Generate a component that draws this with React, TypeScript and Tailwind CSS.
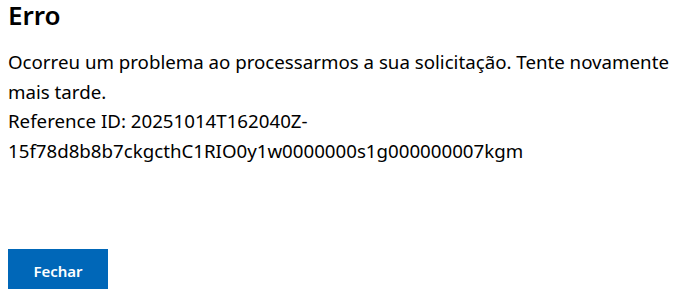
import React from 'react';

export default function App() {
  return (
    <div className="min-h-screen bg-white px-2 text-black" style={{ fontFamily: '"Segoe UI", "Noto Sans", sans-serif' }}>
      <h1 className="text-[26px] font-semibold leading-[30px]">Erro</h1>
      <div className="mt-[17px] text-[18.7px] leading-[29.7px]">
        <p>Ocorreu um problema ao processarmos a sua solicitação. Tente novamente mais tarde.</p>
        <p>Reference ID: 20251014T162040Z-15f78d8b8b7ckgcthC1RIO0y1w0000000s1g000000007kgm</p>
      </div>
      <button className="mt-[83px] h-[44px] w-[100px] bg-[#0067b8] text-[15px] font-semibold text-white">
        Fechar
      </button>
    </div>
  );
}
